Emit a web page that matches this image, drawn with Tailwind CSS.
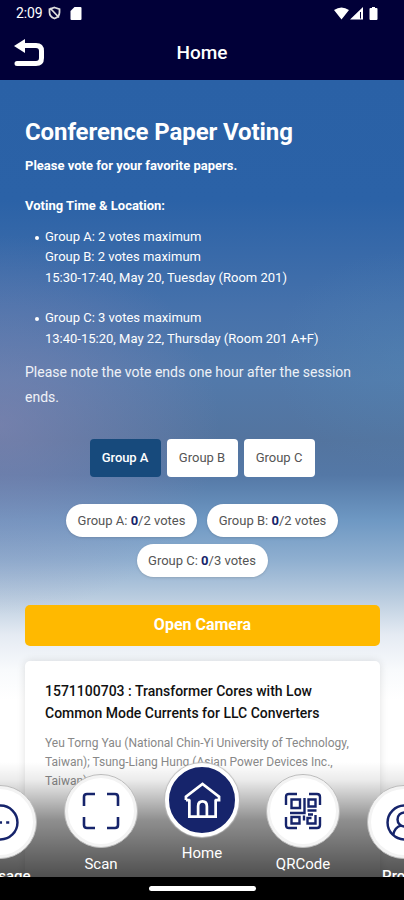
<!DOCTYPE html>
<html lang="en">
<head>
<meta charset="utf-8">
<title>Home</title>
<script src="https://cdn.jsdelivr.net/npm/@tailwindcss/browser@4"></script>
</head>
<body class="bg-black">
<div class="relative flex h-[900px] w-[404px] flex-col overflow-hidden font-[Roboto,sans-serif]">
  <header class="h-20 shrink-0 bg-[#010038] text-white">
    <div class="flex h-[26px] items-center pl-4 pr-[26px]">
      <span class="text-[14px] leading-[26px] tracking-[-0.1px]">2:09</span>
      <svg class="ml-[5px] h-[14px] w-[13px]" viewBox="0 0 13 14" fill="none" stroke="#ddd" stroke-width="1.8"><path d="M6.500 1.500 11.500 3.200v3c0 3-2 5.200-5 6.300-3-1.100-5-3.300-5-6.300v-3zM2 2l9 9.500"/></svg>
      <svg class="ml-[9px] h-[13px] w-[12px]" viewBox="0 0 12 13" fill="#fff"><path d="M4.500 0H10.500Q11.500 0 11.500 1V12Q11.500 13 10.500 13H1.500Q.5 13 .5 12V4z"/></svg>
      <svg class="ml-auto h-[13px] w-[44px]" viewBox="0 0 44 13"><path fill="#fff" d="M0 3Q7.500-2 15 3L7.500 12.500zM29 0V12.500H16zM36.500 1h1.500V0h3v1h1.500q1 0 1 1v10q0 1-1 1h-6q-1 0-1-1V2q0-1 1-1z"/><path stroke="#010038" d="M26.500 5v6.500"/></svg>
    </div>
    <div class="grid h-[54px] grid-cols-[1fr_auto_1fr] items-center">
      <svg class="ml-[14px] h-[29px] w-[31px]" viewBox="0 0 31 29"><path fill="#fff" d="M0 7 11 0V14z"/><path d="M9 6.500H22Q27.500 6.500 27.500 12V19Q27.500 24.500 22 24.500H3" fill="none" stroke="#fff" stroke-width="5" stroke-linecap="round"/></svg>
      <h1 class="text-[19px] font-medium">Home</h1>
      <span></span>
    </div>
  </header>

  <main class="relative h-[797px] shrink-0 overflow-hidden bg-[radial-gradient(ellipse_220px_190px_at_0px_345px,rgba(143,137,180,.55),transparent),radial-gradient(ellipse_130px_110px_at_404px_280px,rgba(83,140,184,.3),transparent),linear-gradient(180deg,#2a61a6_0px,#2b62a7_120px,#4571ab_225px,#5279aa_300px,#53749f_360px,#5478a6_395px,#6e98c3_440px,#8fafd0_480px,#bccee0_520px,#e5ebf3_555px,#f8fafc_590px,#fff_620px)] px-[25px] pt-9 text-white">
    <h2 class="text-[24px] leading-8 font-bold tracking-[-0.1px]">Conference Paper Voting</h2>
    <p class="mt-[7.500px] text-[13px] leading-[20.4px] font-bold">Please vote for your favorite papers.<br><br>Voting Time &amp; Location:</p>
    <ul class="mt-[10px] ml-5 list-outside text-[13px] leading-[20.4px]">
      <li class="relative before:absolute before:top-[9px] before:-left-[10px] before:size-1 before:rounded-full before:bg-white">Group A: 2 votes maximum<br>Group B: 2 votes maximum<br>15:30-17:40, May 20, Tuesday (Room 201)</li>
      <li class="relative mt-[20.4px] before:absolute before:top-[9px] before:-left-[10px] before:size-1 before:rounded-full before:bg-white">Group C: 3 votes maximum<br>13:40-15:20, May 22, Thursday (Room 201 A+F)</li>
    </ul>
    <p class="mt-[10.5px] text-[14px] leading-[25px] text-white/90">Please note the vote ends one hour after the session ends.</p>
    <div class="mt-[29px] flex justify-center gap-[6px] text-[13px] text-[#555]">
      <button class="h-[38px] w-[71px] rounded-[4px] bg-[#174a7c] font-medium tracking-[-0.1px] text-white">Group A</button>
      <button class="h-[38px] w-[71px] rounded-[4px] bg-white">Group B</button>
      <button class="h-[38px] w-[71px] rounded-[4px] bg-white">Group C</button>
    </div>
    <div class="mt-[27px] flex flex-wrap justify-center gap-x-[10px] gap-y-[7px] text-[13px] leading-[33px] text-[#555]">
      <span class="w-[131px] rounded-full bg-white text-center shadow-sm">Group A: <b class="text-[#16246b]">0</b>/2 votes</span>
      <span class="w-[131px] rounded-full bg-white text-center shadow-sm">Group B: <b class="text-[#16246b]">0</b>/2 votes</span>
      <span class="w-[131px] rounded-full bg-white text-center shadow-sm">Group C: <b class="text-[#16246b]">0</b>/3 votes</span>
    </div>
    <button class="mt-[28px] block h-[41px] w-[355px] rounded-[5px] bg-[#ffb900] text-[16px] font-bold">Open Camera</button>
    <article class="mt-[15px] h-[230px] w-[355px] rounded-[5px] bg-white px-5 pt-[19px] shadow-[0_0_8px_rgba(0,0,0,.12)]">
      <h3 class="text-[14px] leading-[22px] font-medium text-[#111]">1571100703 : Transformer Cores with Low<br>Common Mode Currents for LLC Converters</h3>
      <p class="mt-[10px] text-[12px] leading-[19px] whitespace-nowrap text-[#888]">Yeu Torng Yau (National Chin-Yi University of Technology,<br>Taiwan); Tsung-Liang Hung (Asian Power Devices Inc.,<br>Taiwan)</p>
    </article>

    <nav class="absolute inset-x-0 bottom-0 flex h-[127px] justify-center bg-[linear-gradient(180deg,transparent_12px,rgba(0,0,0,.08)_30px,rgba(0,0,0,.44)_70px,rgba(0,0,0,.69)_127px)] text-[15px] leading-5">
      <div class="flex w-[101px] shrink-0 flex-col items-center pt-[35px]">
        <div class="flex size-[74px] shrink-0 items-center justify-center rounded-full border border-[#bbb] bg-white shadow-[inset_0_0_0_3px_#f3f3f3]">
          <svg class="size-[37px]" viewBox="0 0 36 36" fill="none" stroke="#16246b" stroke-width="2.400"><circle cx="18" cy="18" r="16.500"/><path d="M9.500 18h3m4 0h3m4 0h3"/></svg>
        </div>
        <span class="mt-[7px] font-medium">Message</span>
      </div>
      <div class="flex w-[101px] shrink-0 flex-col items-center pt-[24px]">
        <div class="flex size-[74px] shrink-0 items-center justify-center rounded-full border border-[#bbb] bg-white shadow-[inset_0_0_0_3px_#f3f3f3]">
          <svg class="size-[38px]" viewBox="0 0 38 38" fill="none" stroke="#16246b" stroke-width="2.600"><path d="M2 14V5Q2 2 5 2h8M25 2h8q3 0 3 3v9M36 25v8q0 3-3 3h-8M13 36H5q-3 0-3-3v-8"/></svg>
        </div>
        <span class="mt-[6px]">Scan</span>
      </div>
      <div class="flex w-[101px] shrink-0 flex-col items-center pt-[13px]">
        <div class="flex size-[74px] shrink-0 items-center justify-center rounded-full border-4 border-white bg-[#16246b] shadow-[0_0_1px_1px_#bbb]">
          <svg class="size-[37px]" viewBox="0 0 38 38" fill="none" stroke="#fff" stroke-width="2.800"><path d="M5.500 18v17.500h27V18M2 18.500V15L19 2 36 15v3.500H32M2 18.500H6M14.500 35V25q0-5 4.500-5t4.500 5V35"/></svg>
        </div>
        <span class="mt-[6px]">Home</span>
      </div>
      <div class="flex w-[101px] shrink-0 flex-col items-center pt-[24px]">
        <div class="flex size-[74px] shrink-0 items-center justify-center rounded-full border border-[#bbb] bg-white shadow-[inset_0_0_0_3px_#f3f3f3]">
          <svg class="size-[38px]" viewBox="0 0 38 38" fill="none" stroke="#16246b" stroke-width="2.400"><path d="M2 13V5Q2 2 5 2h8M25 2h8q3 0 3 3v8M36 25v8q0 3-3 3h-8M13 36H5q-3 0-3-3v-8M7.500 7.500h8.500v8.500h-8.500zM24.500 7.500h7v7h-7zM7.500 25h8v6.500h-8zM20.500 6v15H6M23.500 18.500h9M24 22.500h5M20 23.500v5M31.500 23v8.500H23.500v-5.500h4"/></svg>
        </div>
        <span class="mt-[6px]">QRCode</span>
      </div>
      <div class="flex w-[101px] shrink-0 flex-col items-center pt-[35px]">
        <div class="flex size-[74px] shrink-0 items-center justify-center rounded-full border border-[#bbb] bg-white shadow-[inset_0_0_0_3px_#f3f3f3]">
          <svg class="size-[37px]" viewBox="0 0 36 36" fill="none" stroke="#16246b" stroke-width="2.400"><circle cx="18" cy="18" r="16.500"/><circle cx="18" cy="15" r="6.800"/><path d="M7 30Q8.500 22.500 14.500 21M29 30Q27.500 22.500 21.500 21"/></svg>
        </div>
        <span class="mt-[7px] font-medium">Profile</span>
      </div>
    </nav>
  </main>
  <footer class="flex h-[23px] shrink-0 items-center justify-center bg-black"><div class="h-[5px] w-[107px] rounded-full bg-white"></div></footer>
</div>
</body>
</html>
